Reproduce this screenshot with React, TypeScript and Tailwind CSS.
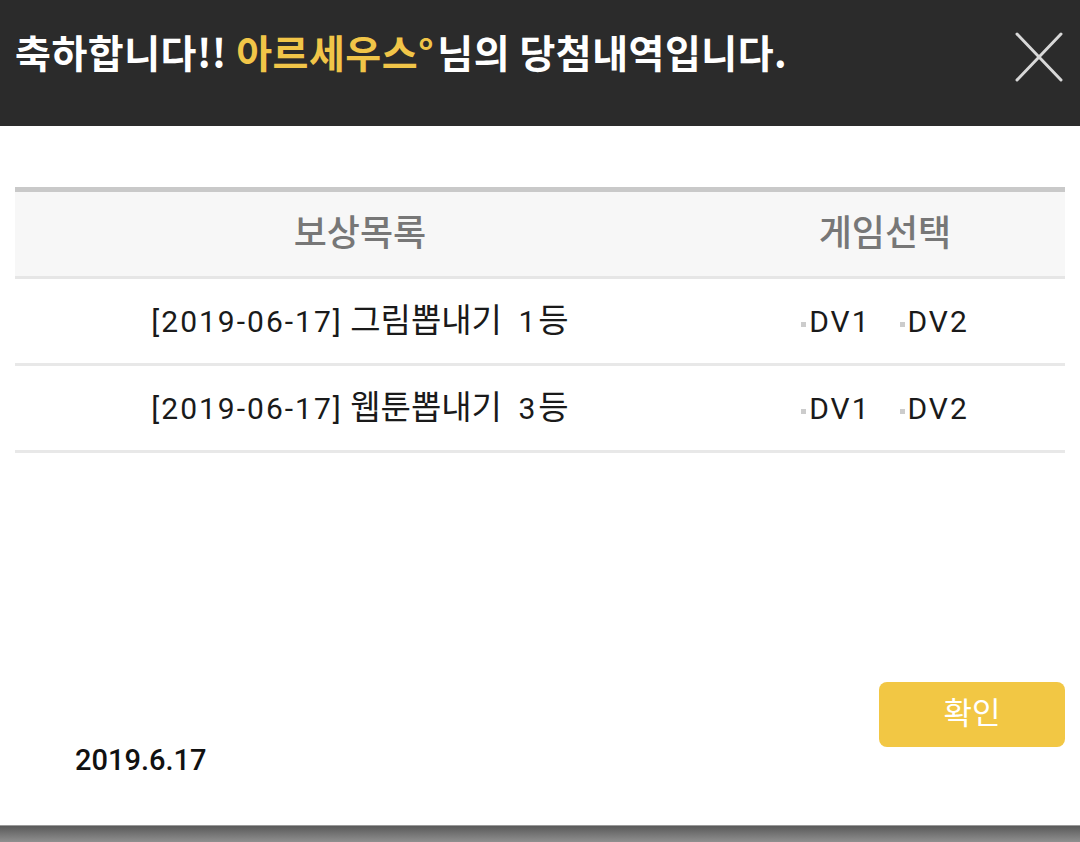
import React from 'react'

const rows = [
  { date: '[2019-06-17]', name: '그림뽑내기', rank: '1' },
  { date: '[2019-06-17]', name: '웹툰뽑내기', rank: '3' },
]

const GameOption = ({ label }: { label: string }) => (
  <span className="flex items-center">
    <span className="mt-[6px] mr-[3px] h-[5px] w-[5px] bg-[#cccccc]" />
    <span className="tracking-[2px]">{label}</span>
  </span>
)

const App = () => {
  return (
    <div
      className="flex h-[842px] w-[1080px] flex-col bg-white"
      style={{ fontFamily: "Roboto, 'Noto Sans CJK KR', sans-serif" }}
    >
      <header className="flex h-[126px] items-start justify-between bg-[#2b2b2b] pl-[15px] pr-[17px]">
        <h1
          className="pt-[28px] text-[39px] font-bold leading-[46px] tracking-[0.5px] text-white"
          style={{ fontFamily: "'Noto Sans CJK KR', sans-serif" }}
        >
          축하합니다!! <span className="mr-[3px] text-[#f1c548]">아르세우스°</span>님의 당첨내역입니다.
        </h1>
        <button className="mt-[32px]">
          <svg width="48" height="50" viewBox="0 0 48 50">
            <path d="M2 2 L46 48 M46 2 L2 48" stroke="#d8d8d8" strokeWidth="3" strokeLinecap="round" />
          </svg>
        </button>
      </header>

      <main className="flex flex-1 flex-col px-[15px] pt-[61px]">
        <div className="border-t-[5px] border-[#c9c9c9]">
          <div className="flex h-[87px] items-center border-b-[3px] border-[#e6e6e6] bg-[#f7f7f7] text-[36px] font-medium text-[#777777]">
            <div className="w-[690px] text-center">보상목록</div>
            <div className="flex-1 text-center">게임선택</div>
          </div>
          {rows.map((row) => (
            <div
              key={row.name}
              className="flex h-[87px] items-center border-b-[3px] border-[#e8e8e8] text-[30px] text-[#1a1a1a]"
            >
              <div className="w-[690px] text-center">
                <span className="tracking-[2px]">{row.date}</span>{' '}
                <span className="text-[33px]">{row.name}</span>{' '}
                <span className="ml-[9px] mr-[3px]">{row.rank}</span>
                <span className="text-[33px]">등</span>
              </div>
              <div className="flex flex-1 justify-center gap-[29px]">
                <GameOption label="DV1" />
                <GameOption label="DV2" />
              </div>
            </div>
          ))}
        </div>

        <div className="flex-1" />

        <div className="flex items-start justify-between pb-[47px]">
          <div className="mt-[61px] pl-[60px] text-[29px] font-medium leading-[35px] text-[#111111]">
            2019.6.17
          </div>
          <button className="h-[65px] w-[186px] rounded-[8px] bg-[#f2c744] text-[31px] text-white">
            확인
          </button>
        </div>
      </main>

      <div className="h-[17px] border-t border-[#9a9a9a] bg-gradient-to-b from-[#5a5a5a] to-[#909090]" />
    </div>
  )
}

export default App
